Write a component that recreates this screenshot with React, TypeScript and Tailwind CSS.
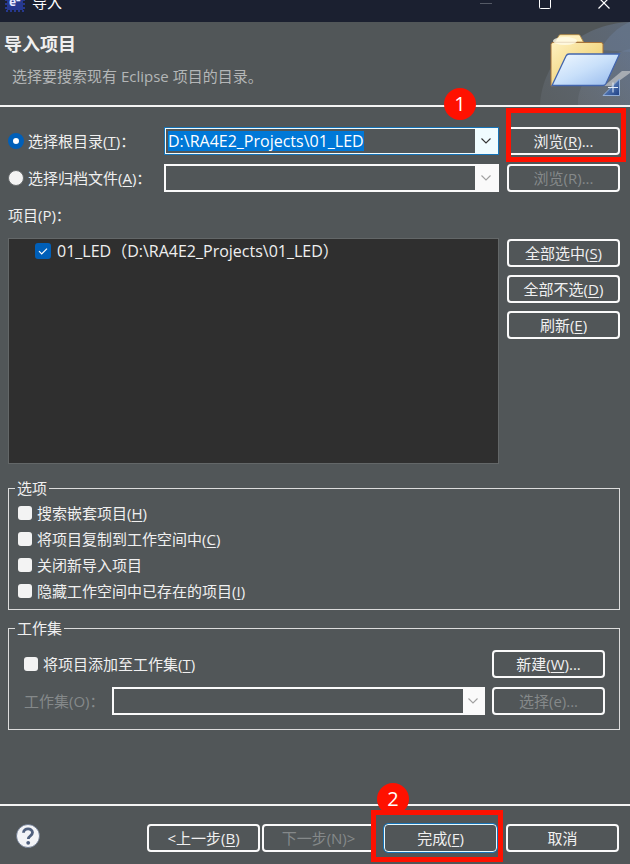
import { useEffect, useRef, type ReactNode } from "react";

function Key({ children }: { children: string }) {
  return <span className="underline decoration-1 underline-offset-2">{children}</span>;
}

function PushButton({
  children,
  disabled = false,
  primary = false,
}: {
  children: ReactNode;
  disabled?: boolean;
  primary?: boolean;
}) {
  const tone = disabled
    ? "border-2 border-[#fafafa] text-[#85898a]"
    : primary
      ? "border border-[#e8fbff] text-[#f0f0f0] outline outline-1 outline-[#1674b8]"
      : "border-2 border-[#fafafa] text-[#f0f0f0]";
  return (
    <button
      type="button"
      disabled={disabled}
      className={`flex h-7 w-[113px] shrink-0 items-center justify-center whitespace-nowrap rounded ${tone}`}
    >
      {children}
    </button>
  );
}

function Chevron() {
  return (
    <svg viewBox="0 0 12 8" className="h-2 w-3" fill="none" stroke="currentColor" strokeWidth="1.1">
      <path d="M1.5 1.5 6 6l4.5-4.5" />
    </svg>
  );
}

function Check({ label, id }: { label: ReactNode; id: string }) {
  return (
    <div className="flex h-[26px] items-center gap-[5px]">
      <input
        id={id}
        type="checkbox"
        className="size-[14px] shrink-0 appearance-none rounded-[3px] bg-[#f3f3f3]"
      />
      <label htmlFor={id} className="whitespace-nowrap">
        {label}
      </label>
    </div>
  );
}

function Group({ title, children }: { title: string; children: ReactNode }) {
  return (
    <fieldset className="border border-[#dcdcdc]">
      <legend className="ml-[6px] h-[22px] px-[2px] leading-[22px]">{title}</legend>
      {children}
    </fieldset>
  );
}

function Badge({ children }: { children: string }) {
  return (
    <span className="flex size-8 items-center justify-center rounded-full bg-[#ff1100] text-xl text-white">
      {children}
    </span>
  );
}

function AppIcon() {
  return (
    <svg viewBox="0 0 20 20" className="size-5">
      <rect x="2" y="2" width="16" height="16" fill="#26388f" />
      <rect x="1" y="1" width="18" height="18" fill="none" stroke="#26388f" strokeWidth="2" strokeDasharray="2 2" />
      <text x="4" y="14" fontSize="12" fontWeight="700" fill="#e6e9ff" fontFamily="Open Sans, sans-serif">
        e²
      </text>
    </svg>
  );
}

function FolderBanner() {
  return (
    <svg viewBox="0 0 92 83" className="h-[83px] w-[92px]">
      <defs>
        <linearGradient id="swoosh" x1="0" x2="1" y1="1" y2="0.2">
          <stop offset="0" stopColor="#7d8590" stopOpacity="0.35" />
          <stop offset="1" stopColor="#6d7f9c" stopOpacity="0.8" />
        </linearGradient>
        <linearGradient id="back" x1="0" x2="1" y1="0" y2="1">
          <stop offset="0" stopColor="#fff1c0" />
          <stop offset="1" stopColor="#e9c65a" />
        </linearGradient>
        <linearGradient id="front" x1="0" x2="1" y1="0" y2="1">
          <stop offset="0" stopColor="#f2f9ff" />
          <stop offset="0.5" stopColor="#c9e0fa" />
          <stop offset="1" stopColor="#94b8ec" />
        </linearGradient>
        <linearGradient id="corner" x1="0" x2="1" y1="0" y2="1">
          <stop offset="0" stopColor="#7fa3d4" />
          <stop offset="1" stopColor="#1d3f85" />
        </linearGradient>
      </defs>
      <path d="M2 83C4 40 40 2 92 0v83Z" fill="url(#swoosh)" opacity="0.55" />
      <path d="M40 83C38 60 62 34 92 27v56Z" fill="url(#swoosh)" opacity="0.6" />
      <path d="M62 28C70 14 80 5 92 0v30Z" fill="#6f82a0" opacity="0.4" />
      <path d="M66 64 84 49h8v2L74 64Z" fill="#b3b6bb" opacity="0.85" />
      <path d="m17 20 4-6.5q.5-.8 1.5-.8h18q1 0 1.5.8l3.5 6.5Z" fill="#fff0bd" stroke="#b98a3c" strokeWidth="0.8" />
      <path d="M13 64V22.5q0-2 2-2h48q2 0 2 2V60Z" fill="url(#back)" stroke="#a5723a" strokeWidth="1" />
      <ellipse cx="27" cy="19" rx="12" ry="4" fill="#fffbe8" opacity="0.8" />
      <path d="M14 63.5 28 34q1-2 3-2h50.500L68 61.500q-1 2-3 2Z" fill="url(#front)" stroke="#4365ad" strokeWidth="1.3" />
      <path d="M65 73.500 81.500 57v16.500Z" fill="url(#corner)" stroke="#91add8" strokeWidth="1" />
      <path d="M75 60.500v10M70 65.500h10" stroke="#e4eefb" strokeWidth="1" />
    </svg>
  );
}

export default function App() {
  const pathRef = useRef<HTMLInputElement>(null);

  useEffect(() => {
    pathRef.current?.focus();
    pathRef.current?.select();
  }, []);

  return (
    <div className="flex min-h-screen flex-col overflow-hidden bg-[#515658] font-['Open_Sans','Noto_Sans_CJK_SC',sans-serif] text-[15px] leading-[22px] text-[#f0f0f0]">
      <header className="flex h-[22px] shrink-0 items-end justify-between overflow-hidden bg-[#1b2030] pl-[5px] pr-5 text-white">
        <div className="flex items-center gap-[7px] pb-[9px]">
          <AppIcon />
          <span>导入</span>
        </div>
        <div className="flex items-center gap-[47px] pb-[13px]">
          <button type="button" aria-label="最小化" className="text-[#555a66]">
            <svg viewBox="0 0 12 12" className="size-3" stroke="currentColor">
              <path d="M0 6.5h12" />
            </svg>
          </button>
          <button type="button" aria-label="最大化">
            <svg viewBox="0 0 12 12" className="size-3" fill="none" stroke="currentColor">
              <rect x="0.5" y="0.5" width="11" height="11" rx="1" />
            </svg>
          </button>
          <button type="button" aria-label="关闭">
            <svg viewBox="0 0 12 12" className="size-3" fill="none" stroke="currentColor" strokeWidth="1.2">
              <path d="m.5.5 11 11m0-11-11 11" />
            </svg>
          </button>
        </div>
      </header>

      <section className="flex shrink-0 justify-between border-b-2 border-[#f4f4f4]">
        <div className="pt-[11px]">
          <h1 className="pl-1 text-lg font-bold leading-[22px]">导入项目</h1>
          <p className="mt-[10px] pl-3 text-[#b4b6b7]">选择要搜索现有 Eclipse 项目的目录。</p>
        </div>
        <FolderBanner />
      </section>

      <main className="pl-2 pr-[10px] pt-5">
        <div className="flex items-center">
          <div className="flex w-[156px] shrink-0 items-center gap-1">
            <input
              id="root"
              type="radio"
              name="source"
              defaultChecked
              className="size-4 appearance-none rounded-full border-[5px] border-[#005fb8] bg-white"
            />
            <label htmlFor="root">
              选择根目录(<Key>T</Key>)：
            </label>
          </div>
          <div className="flex h-7 min-w-0 flex-1 border border-[#1674b8] bg-[#f0fcff] p-px">
            <input
              ref={pathRef}
              aria-label="根目录"
              defaultValue="D:\RA4E2_Projects\01_LED"
              className="min-w-0 flex-1 bg-[#515658] pl-[2px] text-base leading-5 outline-none selection:bg-[#0078d7] selection:text-white"
            />
            <button type="button" aria-label="展开根目录" className="flex w-[22px] items-center justify-center text-[#333]">
              <Chevron />
            </button>
          </div>
          <div className="relative ml-2">
            <PushButton>
              浏览(<Key>R</Key>)...
            </PushButton>
            <div className="pointer-events-none absolute -bottom-[7px] -left-px -right-[6px] -top-[19px] border-[5px] border-[#ff1100]" />
            <div className="pointer-events-none absolute -left-[63px] -top-[39px]">
              <Badge>1</Badge>
            </div>
          </div>
        </div>

        <div className="mt-[9px] flex items-center">
          <div className="flex w-[156px] shrink-0 items-center gap-1">
            <input
              id="archive"
              type="radio"
              name="source"
              className="size-4 appearance-none rounded-full border border-[#666a6c] bg-[#f3f3f3]"
            />
            <label htmlFor="archive">
              选择归档文件(<Key>A</Key>)：
            </label>
          </div>
          <div className="flex h-7 min-w-0 flex-1 border-2 border-[#fafafa] bg-[#fafafa]">
            <input aria-label="归档文件" disabled className="min-w-0 flex-1 bg-[#515658]" />
            <button
              type="button"
              disabled
              aria-label="展开归档文件"
              className="flex w-[22px] items-center justify-center text-[#a0a0a0]"
            >
              <Chevron />
            </button>
          </div>
          <div className="ml-2">
            <PushButton disabled>浏览(R)...</PushButton>
          </div>
        </div>

        <div className="my-3">项目(P)：</div>

        <div className="flex gap-2">
          <div className="h-[226px] min-w-0 flex-1 border border-[#636768] bg-[#2f2f2f]">
            <div className="flex h-6 items-center gap-[6px] pl-[26px]">
              <span className="relative flex size-4">
                <input
                  id="project"
                  type="checkbox"
                  defaultChecked
                  className="size-4 appearance-none rounded-[3px] bg-[#005fb8]"
                />
                <svg
                  viewBox="0 0 16 16"
                  className="pointer-events-none absolute inset-0 size-4"
                  fill="none"
                  stroke="white"
                  strokeWidth="1.2"
                >
                  <path d="m4 8.200 2.700 2.700L12 5.600" />
                </svg>
              </span>
              <label htmlFor="project" className="text-base leading-[22px]">
                01_LED（D:\RA4E2_Projects\01_LED）
              </label>
            </div>
          </div>
          <div className="flex flex-col gap-2 pt-px">
            <PushButton>
              全部选中(<Key>S</Key>)
            </PushButton>
            <PushButton>
              全部不选(<Key>D</Key>)
            </PushButton>
            <PushButton>
              刷新(<Key>E</Key>)
            </PushButton>
          </div>
        </div>

        <div className="mt-[13px] flex flex-col gap-[7px]">
          <Group title="选项">
            <div className="pb-[5px] pl-[9px] pt-px">
              <Check id="nested" label={<>搜索嵌套项目(<Key>H</Key>)</>} />
              <Check id="copy" label={<>将项目复制到工作空间中(<Key>C</Key>)</>} />
              <Check id="close" label="关闭新导入项目" />
              <Check id="hide" label={<>隐藏工作空间中已存在的项目(<Key>I</Key>)</>} />
            </div>
          </Group>

          <Group title="工作集">
            <div className="flex flex-col gap-[9px] pb-[14px] pl-[15px] pr-[14px] pt-[11px]">
              <div className="flex items-center justify-between">
                <Check id="addset" label={<>将项目添加至工作集(<Key>T</Key>)</>} />
                <PushButton>
                  新建(<Key>W</Key>)...
                </PushButton>
              </div>
              <div className="flex items-center">
                <label htmlFor="workset" className="w-[88px] shrink-0 text-[#85898a]">
                  工作集(O)：
                </label>
                <div className="relative mr-[7px] flex h-7 min-w-0 flex-1 border-2 border-[#fafafa] bg-[#fafafa] pr-5">
                  <select id="workset" disabled className="min-w-0 flex-1 appearance-none bg-[#515658]" />
                  <span className="pointer-events-none absolute inset-y-0 right-0 flex w-5 items-center justify-center text-[#a0a0a0]">
                    <Chevron />
                  </span>
                </div>
                <PushButton disabled>选择(e)...</PushButton>
              </div>
            </div>
          </Group>
        </div>
      </main>

      <div className="flex-1" />

      <footer className="flex shrink-0 items-start justify-between border-t-2 border-[#f4f4f4] pb-3 pl-4 pr-[11px] pt-[18px]">
        <button type="button" aria-label="帮助">
          <svg viewBox="0 0 24 24" className="size-6">
            <circle cx="12" cy="12" r="11.5" fill="#f3f4f7" stroke="#62718c" strokeWidth="0.8" />
            <path
              d="M7.500 8.800C7.500 3.800 16.500 3.600 16.500 8.600c0 3.300-4.200 3.100-4.200 6.400"
              fill="none"
              stroke="#50607e"
              strokeWidth="2.8"
            />
            <circle cx="12.2" cy="18.8" r="1.9" fill="#50607e" />
          </svg>
        </button>
        <div className="flex gap-[9px]">
          <div className="flex gap-[2px]">
            <PushButton>
              &lt;上一步(<Key>B</Key>)
            </PushButton>
            <PushButton disabled>下一步(N)&gt;</PushButton>
          </div>
          <div className="relative">
            <PushButton primary>
              完成(<Key>F</Key>)
            </PushButton>
            <div className="pointer-events-none absolute -bottom-[10px] -left-[13px] -right-[6px] -top-[14px] border-[5px] border-[#ff1100]" />
            <div className="pointer-events-none absolute -left-[7px] -top-[41px]">
              <Badge>2</Badge>
            </div>
          </div>
          <PushButton>取消</PushButton>
        </div>
      </footer>
    </div>
  );
}
